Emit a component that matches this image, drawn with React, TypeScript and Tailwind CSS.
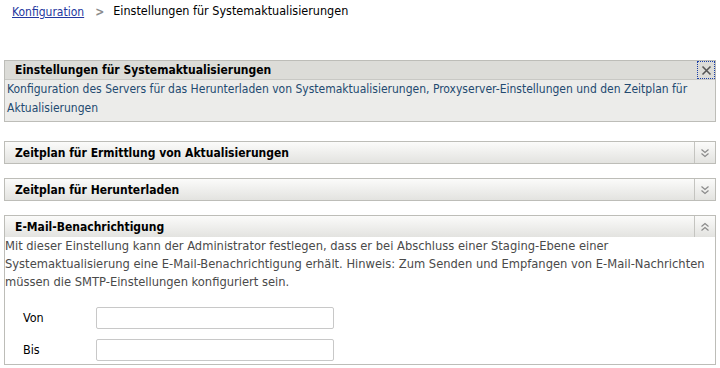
import React from "react";

const font = { fontFamily: '"DejaVu Sans Condensed", "DejaVu Sans", sans-serif' };

function DownIcon() {
  return (
    <svg width="10" height="10" viewBox="0 0 10 10" fill="none" stroke="#8a8a8a" strokeWidth="1.2">
      <path d="M1.5 1.5 L5 4.5 L8.5 1.5" />
      <path d="M1.5 5.5 L5 8.5 L8.5 5.5" />
    </svg>
  );
}

function UpIcon() {
  return (
    <svg width="10" height="10" viewBox="0 0 10 10" fill="none" stroke="#8a8a8a" strokeWidth="1.2">
      <path d="M1.5 4.5 L5 1.5 L8.5 4.5" />
      <path d="M1.5 8.5 L5 5.5 L8.5 8.5" />
    </svg>
  );
}

function CollapsedPanel({ title }: { title: string }) {
  return (
    <div className="mx-1 flex h-[23px] border border-[#bdbdb8] bg-gradient-to-b from-[#fbfbfa] to-[#e3e3e0]">
      <div className="flex flex-1 items-center pl-[10px] text-[12px] font-bold text-black">{title}</div>
      <div className="flex w-[21px] items-center justify-center border-l border-[#c4c4c0]">
        <DownIcon />
      </div>
    </div>
  );
}

export default function App() {
  return (
    <div className="h-[368px] w-[720px] overflow-hidden bg-white text-[12px]" style={font}>
      <div className="flex h-[21px] items-end pl-[12px] text-[12px]">
        <a className="text-[#2438a0] underline decoration-[#2438a0]">Konfiguration</a>
        <span className="ml-[11px] mr-[9px] font-bold text-[#8c8c8c]">&gt;</span>
        <span className="text-[12.5px] text-black">Einstellungen für Systemaktualisierungen</span>
      </div>

      <div className="mx-1 mt-[39px] border border-[#bdbdb8]">
        <div className="flex h-[18px] bg-[#dcdcd8]">
          <div className="flex flex-1 items-center pl-[10px] text-[12px] font-bold text-black">
            Einstellungen für Systemaktualisierungen
          </div>
          <div className="flex h-[18px] w-[18px] items-center justify-center outline-1 outline-dotted outline-[#1a3fa8] -outline-offset-1">
            <svg width="11" height="11" viewBox="0 0 11 11" stroke="#555" strokeWidth="1.6">
              <path d="M1.5 1.5 L9.5 9.5 M9.5 1.5 L1.5 9.5" />
            </svg>
          </div>
        </div>
        <div className="border-t border-[#c8c8c4] bg-[#ececea] px-[2px] pb-[3px] leading-[19px] text-[#234a70]">
          Konfiguration des Servers für das Herunterladen von Systemaktualisierungen, Proxyserver-Einstellungen und den Zeitplan für Aktualisierungen
        </div>
      </div>

      <div className="mt-[19px]">
        <CollapsedPanel title="Zeitplan für Ermittlung von Aktualisierungen" />
      </div>
      <div className="mt-[14px]">
        <CollapsedPanel title="Zeitplan für Herunterladen" />
      </div>

      <div className="mx-1 mt-[14px] border border-[#bdbdb8]">
        <div className="flex h-[21px] bg-gradient-to-b from-[#fbfbfa] to-[#e3e3e0]">
          <div className="flex flex-1 items-center pl-[10px] text-[12px] font-bold text-black">E-Mail-Benachrichtigung</div>
          <div className="flex w-[21px] items-center justify-center border-l border-[#c4c4c0]">
            <UpIcon />
          </div>
        </div>
        <div className="text-[12.8px] leading-[18px] text-[#4a4a4a]">
          Mit dieser Einstellung kann der Administrator festlegen, dass er bei Abschluss einer Staging-Ebene einer Systemaktualisierung eine E-Mail-Benachrichtigung erhält. Hinweis: Zum Senden und Empfangen von E-Mail-Nachrichten müssen die SMTP-Einstellungen konfiguriert sein.
        </div>
        <div className="grid grid-cols-[73px_238px] items-center gap-y-[10px] pb-[3px] pl-[18px] pt-[16px] text-[12.5px] text-black">
          <span>Von</span>
          <div className="h-[22px] rounded-[2px] border border-[#c8c8c8]" />
          <span>Bis</span>
          <div className="h-[22px] rounded-[2px] border border-[#c8c8c8]" />
        </div>
      </div>
    </div>
  );
}
